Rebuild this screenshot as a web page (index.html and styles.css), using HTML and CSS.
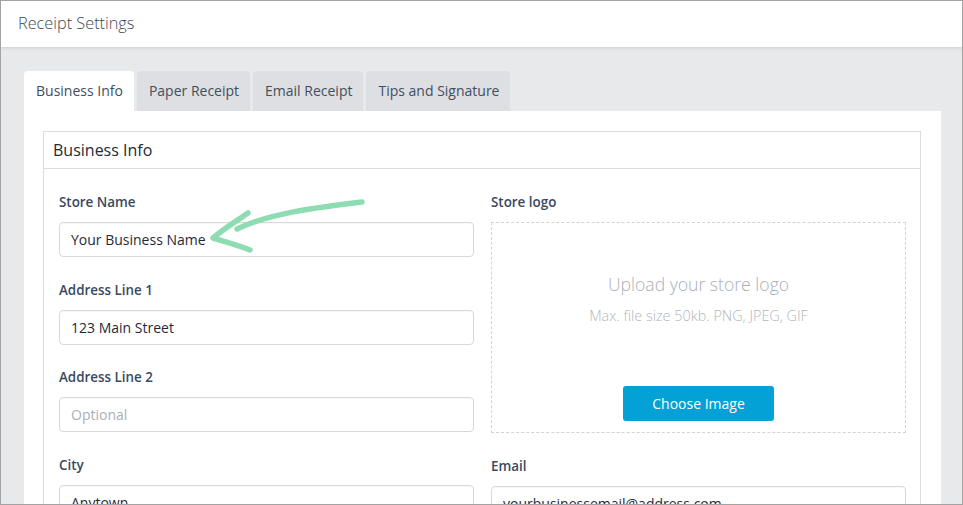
FILE: index.html
```html
<!DOCTYPE html>
<html>
<head>
<meta charset="utf-8">
<link rel="stylesheet" href="styles.css">
</head>
<body>
<div class="frame">
  <header class="topbar">Receipt Settings</header>
  <main class="main">
    <nav class="tabs">
      <div class="tab active">Business Info</div>
      <div class="tab">Paper Receipt</div>
      <div class="tab">Email Receipt</div>
      <div class="tab">Tips and Signature</div>
    </nav>
    <section class="panel">
      <div class="card">
        <div class="card-head">Business Info</div>
        <div class="card-body">
          <div class="col">
            <div class="field">
              <div class="label">Store Name</div>
              <div class="input">Your Business Name</div>
            </div>
            <div class="field">
              <div class="label">Address Line 1</div>
              <div class="input">123 Main Street</div>
            </div>
            <div class="field">
              <div class="label">Address Line 2</div>
              <div class="input placeholder">Optional</div>
            </div>
            <div class="field">
              <div class="label">City</div>
              <div class="input">Anytown</div>
            </div>
          </div>
          <div class="col">
            <div class="field">
              <div class="label">Store logo</div>
              <div class="dropzone">
                <div class="drop-title">Upload your store logo</div>
                <div class="drop-sub">Max. file size 50kb. PNG, JPEG, GIF</div>
                <div class="btn">Choose Image</div>
              </div>
            </div>
            <div class="field">
              <div class="label">Email</div>
              <div class="input">yourbusinessemail@address.com</div>
            </div>
          </div>
        </div>
      </div>
    </section>
  </main>
  <svg class="arrow" width="963" height="505" viewBox="0 0 963 505">
    <g fill="none" stroke="#8edcb2" stroke-width="5.5" stroke-linecap="round" stroke-linejoin="round">
      <path d="M362 202 C 320 207, 270 213, 237 229"/>
      <path d="M248 213 C 235 222, 222 230, 213 238 C 226 242, 240 246, 250 250"/>
    </g>
  </svg>
</div>
</body>
</html>
```
FILE: styles.css
```css
* { box-sizing: border-box; }
html, body { margin: 0; padding: 0; }
body {
  font-family: "Open Sans", "Liberation Sans", sans-serif;
  color: #3b4758;
  background: #fff;
}
.frame {
  position: relative;
  width: 963px;
  height: 505px;
  border: 1px solid #a3a3a3;
  overflow: hidden;
  background: #e8e9eb;
  display: flex;
  flex-direction: column;
}
.topbar {
  height: 46px;
  flex: none;
  background: #fff;
  padding: 0 0 0 17px;
  line-height: 44px;
  font-size: 16.3px;
  font-weight: 300;
  color: #3e4856;
  box-shadow: 0 1px 3px rgba(0,0,0,0.12);
  position: relative;
  z-index: 1;
}
.main {
  flex: 1;
  padding: 24px 21px 0 23px;
  display: flex;
  flex-direction: column;
  min-height: 0;
}
.tabs {
  display: flex;
  gap: 3px;
  height: 40px;
  flex: none;
}
.tab {
  background: #dedfe2;
  border-radius: 4px 4px 0 0;
  padding: 0 11px 0 12px;
  line-height: 40px;
  font-size: 14px;
  color: #424e5e;
}
.tab.active { background: #fff; }
.panel {
  flex: 1;
  background: #fff;
  padding: 20px 20px 0 19px;
  min-height: 0;
}
.card {
  border: 1px solid #dcdcdc;
  border-bottom: none;
  height: 100%;
}
.card-head {
  height: 37px;
  border-bottom: 1px solid #dcdcdc;
  padding-left: 9px;
  line-height: 37px;
  font-size: 16px;
  color: #222a35;
}
.card-body {
  display: flex;
  gap: 17px;
  padding: 23px 14px 0 15px;
}
.col { flex: 1; display: flex; flex-direction: column; }
.field { margin-bottom: 22.7px; }
.label {
  font-size: 13.4px;
  font-weight: 600;
  line-height: 20px;
  color: #3a4960;
  margin-bottom: 10px;
}
.input {
  height: 35px;
  border: 1px solid #d9d9d9;
  border-radius: 4px;
  padding: 0 11px;
  line-height: 33px;
  font-size: 14px;
  color: #1f2a38;
  box-shadow: inset 0 1px 1px rgba(0,0,0,0.03);
}
.input.placeholder { color: #a9b0b8; }
.dropzone {
  height: 211px;
  border: 1px dashed #d3d3d3;
  display: flex;
  flex-direction: column;
  align-items: center;
  padding-top: 48px;
}
.drop-title {
  font-size: 17.6px;
  font-weight: 300;
  color: #a9aeb6;
  line-height: 26px;
}
.drop-sub {
  margin-top: 9px;
  font-size: 14.4px;
  font-weight: 300;
  color: #b1b5bc;
  line-height: 20px;
}
.btn {
  margin-top: 60px;
  width: 151px;
  height: 35px;
  background: #03a1d6;
  border-radius: 3px;
  color: #fff;
  font-size: 14px;
  line-height: 35px;
  text-align: center;
}
.arrow {
  position: absolute;
  left: -1px;
  top: -1px;
  pointer-events: none;
}
```
